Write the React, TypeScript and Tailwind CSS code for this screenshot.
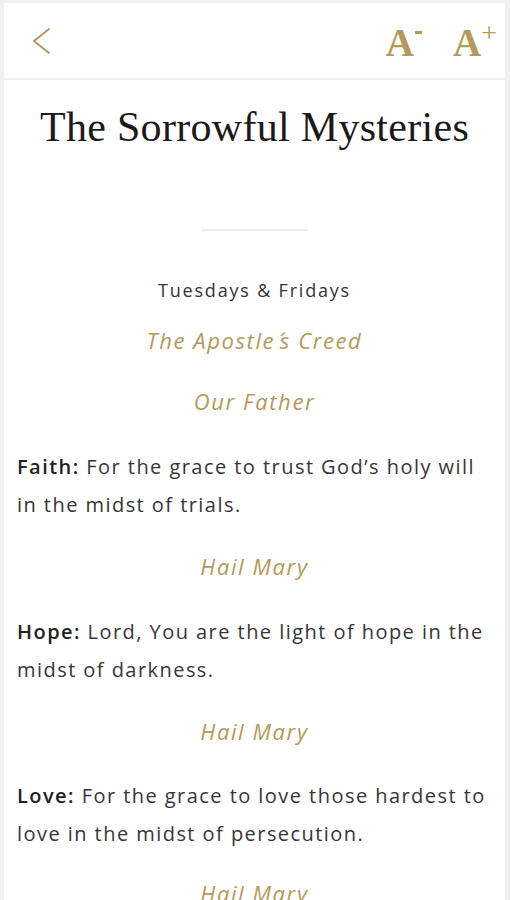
import React from "react";

const gold = "text-[#b39a58]";

function Gold({ children, className = "" }: { children: React.ReactNode; className?: string }) {
  return (
    <p className={`text-center italic ${gold} text-[22px] leading-[28px] tracking-[1.6px] ${className}`}>
      {children}
    </p>
  );
}

function Para({ label, text, className = "" }: { label: string; text: string; className?: string }) {
  return (
    <p className={`text-[20px] leading-[38px] tracking-[1.45px] text-[#363636] ${className}`}>
      <b className="font-semibold text-[#222]">{label}</b> {text}
    </p>
  );
}

export default function App() {
  return (
    <div className="w-[510px] h-[900px] bg-[#f1f1f1] pl-[4px] pr-[5px] pt-[3px] overflow-hidden">
      <header className="h-[75px] bg-white flex items-center justify-between pl-[27px] pr-[8px]">
        <svg width="22" height="30" viewBox="0 0 22 30">
          <polyline points="18,3 3,15 18,27" fill="none" stroke="#b39a58" strokeWidth="2" strokeLinecap="round" strokeLinejoin="round" />
        </svg>
        <div className={`flex items-center gap-[31px] font-['Liberation_Serif',serif] font-bold ${gold} text-[39px] leading-none mt-[3px]`}>
          <span className="flex items-start">
            A<span className="block w-[7px] h-[3px] bg-[#b39a58] mt-[8px] ml-[1px]" />
          </span>
          <span className="flex items-start">
            A<span className="text-[28px] font-normal leading-none mt-[-4px]">+</span>
          </span>
        </div>
      </header>
      <main className="mt-[2px] bg-white h-[820px] px-[13px] font-['Open_Sans',sans-serif]">
        <h1 className="pt-[23px] text-center font-['Liberation_Serif',serif] text-[42px] leading-[48px] tracking-[0.3px] text-[#1a1a1a]">
          The Sorrowful Mysteries
        </h1>
        <div className="mx-auto mt-[78px] w-[107px] h-[2px] bg-[#ececec]" />
        <p className="mt-[47px] text-center text-[18px] leading-[24px] text-[#333] tracking-[1.8px]">
          Tuesdays &amp; Fridays
        </p>
        <Gold className="mt-[24px]">
          The Apostle<span className="ml-[3px]">´</span>s Creed
        </Gold>
        <Gold className="mt-[33px]">Our Father</Gold>
        <Para className="mt-[33px]" label="Faith:" text="For the grace to trust God’s holy will in the midst of trials." />
        <Gold className="mt-[28px]">Hail Mary</Gold>
        <Para className="mt-[33px]" label="Hope:" text="Lord, You are the light of hope in the midst of darkness." />
        <Gold className="mt-[28px]">Hail Mary</Gold>
        <Para className="mt-[32px]" label="Love:" text="For the grace to love those hardest to love in the midst of persecution." />
        <Gold className="mt-[26px]">Hail Mary</Gold>
      </main>
    </div>
  );
}
